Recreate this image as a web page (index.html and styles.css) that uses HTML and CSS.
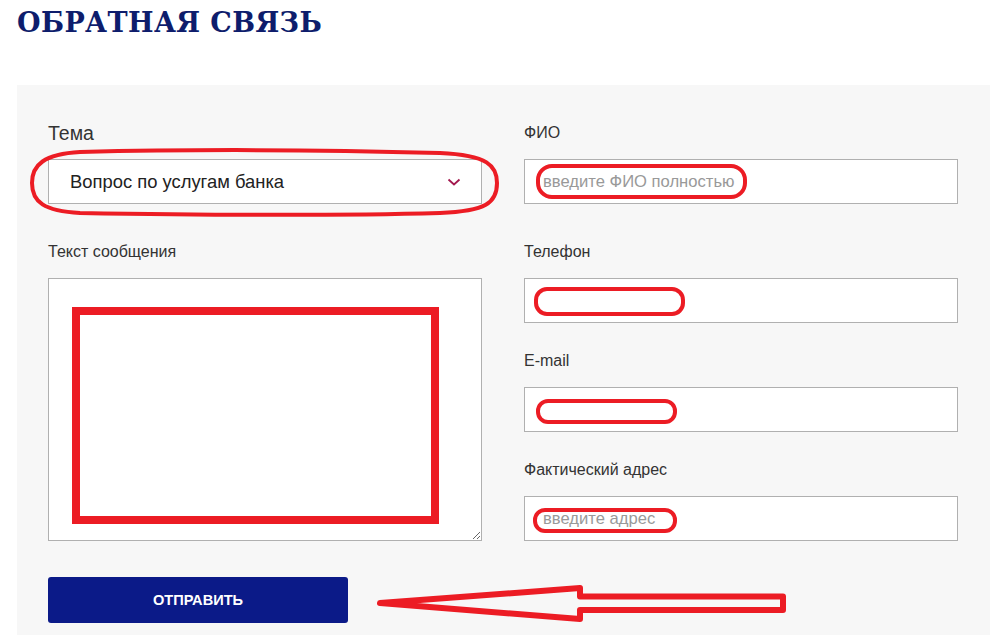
FILE: index.html
```html
<!DOCTYPE html>
<html lang="ru">
<head>
<meta charset="utf-8">
<title>Обратная связь</title>
<link rel="stylesheet" href="styles.css">
</head>
<body>
<div class="page">
  <h1 class="title">ОБРАТНАЯ СВЯЗЬ</h1>
  <form class="panel">
    <div class="grid">
      <div class="field row1">
        <label class="label label-big">Тема</label>
        <div class="select">
          <span>Вопрос по услугам банка</span>
          <svg class="chev" width="14" height="8" viewBox="0 0 14 8"><path d="M1.5 1.5 L7 6.5 L12.5 1.5" fill="none" stroke="#a3184e" stroke-width="1.8"/></svg>
        </div>
      </div>
      <div class="field row1">
        <label class="label">ФИО</label>
        <input class="input" type="text" placeholder="введите ФИО полностью">
      </div>
      <div class="field">
        <label class="label">Текст сообщения</label>
        <textarea class="textarea"></textarea>
      </div>
      <div class="stack">
        <div class="field">
          <label class="label">Телефон</label>
          <input class="input" type="text">
        </div>
        <div class="field">
          <label class="label">E-mail</label>
          <input class="input" type="text">
        </div>
        <div class="field">
          <label class="label">Фактический адрес</label>
          <input class="input" type="text" placeholder="введите адрес">
        </div>
      </div>
    </div>
    <button class="btn" type="button">ОТПРАВИТЬ</button>
  </form>
</div>
<svg class="marks" width="1000" height="635" viewBox="0 0 1000 635">
  <g fill="none" stroke="#ec1c24" stroke-linejoin="round" stroke-linecap="round">
    <path stroke-width="4" d="M80 152 C200 149 330 150 440 153 C488 155 497 166 497 183 C497 203 486 211 440 213 C330 216 200 215 80 213 C44 211 32 202 32 183 C32 165 44 154 80 152 Z"/>
    <rect stroke-width="4" x="538" y="166" width="207" height="31" rx="14"/>
    <rect stroke-width="4" x="536" y="289" width="147" height="25" rx="11"/>
    <rect stroke-width="4" x="538" y="401" width="137" height="21" rx="10"/>
    <rect stroke-width="4" x="535" y="510" width="140" height="21" rx="10"/>
    <rect stroke-width="8" stroke-linejoin="miter" x="76" y="311" width="359" height="209"/>
    <path stroke-width="6" d="M380 603 L580 588 L580 596.5 L783 596.5 L783 610 L580 610 L580 619 Z"/>
  </g>
</svg>
</body>
</html>
```

FILE: styles.css
```css
html, body {
  margin: 0;
  padding: 0;
  background: #ffffff;
}

body {
  font-family: "Liberation Sans", Arial, sans-serif;
  color: #333333;
  width: 1000px;
  height: 635px;
  overflow: hidden;
  position: relative;
}

.page {
  padding: 0 10px 0 17px;
}

.title {
  margin: 0;
  padding-top: 5px;
  height: 85px;
  box-sizing: border-box;
  font-family: "DejaVu Serif", "Liberation Serif", serif;
  font-weight: bold;
  font-size: 27px;
  line-height: 36px;
  color: #0e1d6c;
  letter-spacing: 0.4px;
}

.panel {
  background: #f7f7f7;
  padding: 37px 32px 0 31px;
  height: 550px;
  box-sizing: border-box;
}

.grid {
  display: grid;
  grid-template-columns: 434px 434px;
  column-gap: 42px;
  row-gap: 38px;
}

.field {
  display: flex;
  flex-direction: column;
}

.label {
  display: block;
  font-size: 16px;
  line-height: 20px;
  margin-bottom: 16px;
  color: #333333;
}

.row1 .label {
  line-height: 22px;
  margin-bottom: 15px;
}

.row1 .label-big {
  font-size: 19.5px;
}

.select {
  height: 45px;
  box-sizing: border-box;
  border: 1px solid #b0b0b0;
  background: #ffffff;
  display: flex;
  align-items: center;
  justify-content: space-between;
  padding: 0 20px 0 21px;
  font-size: 18.4px;
  color: #222222;
}

.chev {
  display: block;
}

.input {
  height: 45px;
  box-sizing: border-box;
  border: 1px solid #b0b0b0;
  background: #ffffff;
  padding: 0 18px;
  margin: 0;
  font-family: "Liberation Sans", Arial, sans-serif;
  font-size: 16.6px;
  color: #222222;
  outline: none;
}

.input::placeholder {
  color: #999999;
}

.textarea {
  height: 263px;
  box-sizing: border-box;
  border: 1px solid #b0b0b0;
  background: #ffffff;
  margin: 0;
  padding: 10px 18px;
  font-family: "Liberation Sans", Arial, sans-serif;
  font-size: 16px;
  resize: both;
  outline: none;
}

.stack {
  display: flex;
  flex-direction: column;
  gap: 28px;
}

.btn {
  display: block;
  margin-top: 36px;
  width: 300px;
  height: 46px;
  border: none;
  border-radius: 3px;
  background: #0b1a88;
  color: #ffffff;
  font-family: "Liberation Sans", Arial, sans-serif;
  font-weight: bold;
  font-size: 14.6px;
  cursor: pointer;
}

.marks {
  position: absolute;
  left: 0;
  top: 0;
  pointer-events: none;
}
```
